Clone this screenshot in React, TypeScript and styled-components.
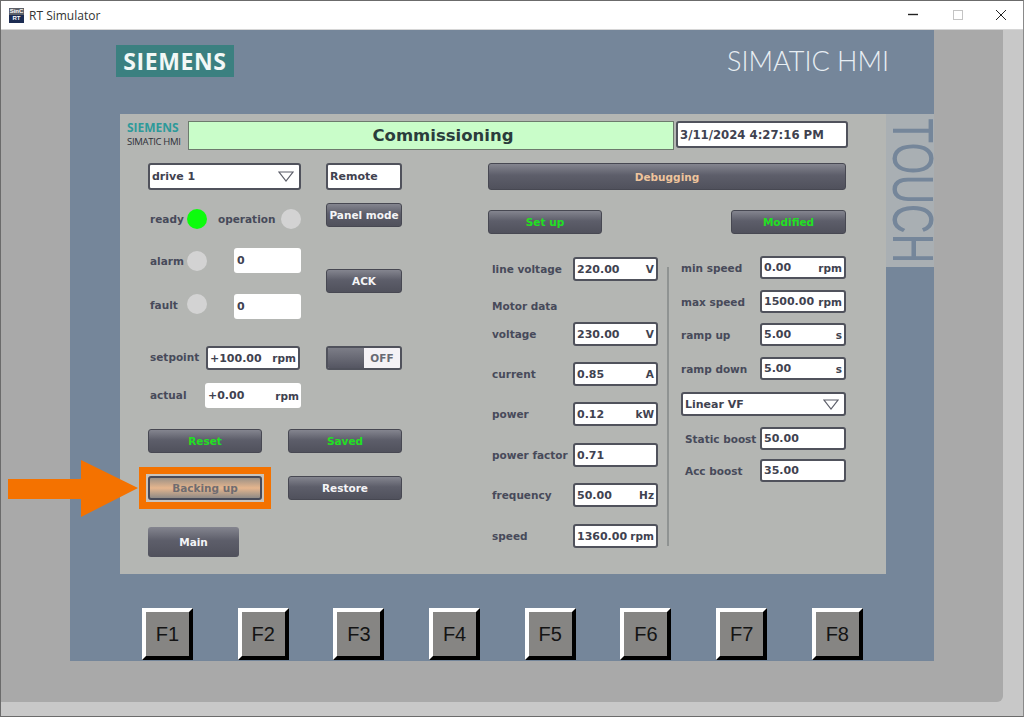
import styled, { createGlobalStyle } from 'styled-components';

const GlobalStyle = createGlobalStyle`
    html, body {
        margin: 0;
        padding: 0;
    }
    body {
        font-family: 'DejaVu Sans', sans-serif;
    }
`;

const Window = styled.div`
    position: relative;
    display: flex;
    flex-direction: column;
    width: 1024px;
    height: 717px;
    overflow: hidden;
    box-sizing: border-box;
    border: 1px solid #6b6b6b;
    border-right-color: #8a8a8a;
    background-color: #c8c8c8;
`;

const TitleBar = styled.div`
    display: flex;
    flex: none;
    align-items: center;
    height: 29px;
    padding: 0 0 0 8px;
    background-color: #fff;
    border-bottom: 1px solid #d6d6d6;
    box-sizing: border-box;
`;

const AppIcon = styled.div`
    display: grid;
    flex: none;
    grid-template-columns: 1fr;
    width: 15px;
    height: 15px;
    margin-right: 5px;
    background: linear-gradient(#5d6068 0 50%, #1c2c52 50% 100%);
    color: #fff;
    font-family: 'Liberation Sans', sans-serif;
    font-size: 6px;
    font-weight: 700;
    line-height: 7px;
    text-align: center;
`;

const AppTitle = styled.span`
    font-family: 'Open Sans', sans-serif;
    font-size: 12px;
    color: #333;
`;

const WindowControls = styled.div`
    display: flex;
    align-items: center;
    margin-left: auto;
`;

const WindowControl = styled.svg`
    display: block;
    width: 46px;
    height: 28px;
`;

const Client = styled.div`
    flex: 1;
    min-height: 0;
`;

const Bezel = styled.div`
    display: flex;
    width: 1002px;
    height: 672px;
    padding-left: 69px;
    box-sizing: border-box;
    background-color: #a9a9a9;
    border-bottom-right-radius: 6px;
`;

const Panel = styled.div`
    display: flex;
    flex-direction: column;
    width: 864px;
    height: 631px;
    background-color: #75869a;
`;

const BrandRow = styled.div`
    display: flex;
    flex: none;
    align-items: flex-start;
    justify-content: space-between;
    height: 84px;
    padding: 15px 45px 0 46px;
    box-sizing: border-box;
`;

const SiemensLogo = styled.div`
    display: flex;
    align-items: center;
    justify-content: center;
    width: 118px;
    height: 32px;
    background-color: #3b8080;
    color: #f2f8f6;
    font-family: 'Open Sans', sans-serif;
    font-size: 23px;
    font-weight: 700;
    letter-spacing: 0.6px;
`;

const SimaticLabel = styled.div`
    color: #e8eef3;
    font-family: 'Lato', sans-serif;
    font-size: 27px;
    font-weight: 300;
    line-height: 32px;
`;

const MiddleRow = styled.div`
    display: flex;
    flex: none;
    align-items: flex-start;
    height: 460px;
    padding-left: 50px;
`;

const Screen = styled.div`
    display: flex;
    flex-direction: column;
    width: 766px;
    height: 460px;
    background-color: #b4b6b3;
    color: #474a5a;
    font-size: 10.5px;
    font-weight: 700;
`;

const TouchStrip = styled.div`
    display: flex;
    align-items: center;
    justify-content: center;
    width: 48px;
    height: 153px;
    padding-left: 6px;
    box-sizing: border-box;
    background-color: #a9afb3;
`;

const TouchText = styled.span`
    display: block;
    flex: none;
    color: #75869a;
    font-family: 'Liberation Sans', sans-serif;
    font-size: 57px;
    line-height: 48px;
    white-space: nowrap;
    writing-mode: vertical-rl;
    transform: scaleY(0.72);
`;

const ScreenHeader = styled.div`
    display: flex;
    flex: none;
    align-items: flex-start;
    height: 49px;
    padding: 7px 0 0 7px;
    box-sizing: border-box;
`;

const MiniBrand = styled.div`
    display: flex;
    flex-direction: column;
    width: 61px;
`;

const MiniSiemens = styled.span`
    color: #2e9a9a;
    font-family: 'Open Sans', sans-serif;
    font-size: 12px;
    font-weight: 700;
    line-height: 13px;
`;

const MiniHmi = styled.span`
    margin-top: 1px;
    color: #2d3038;
    font-family: 'Open Sans', sans-serif;
    font-size: 9.5px;
    font-weight: 400;
    letter-spacing: -0.3px;
    line-height: 13px;
`;

const TitleBox = styled.div`
    display: flex;
    align-items: center;
    justify-content: center;
    width: 486px;
    height: 29px;
    margin-right: 2px;
    padding-left: 24px;
    box-sizing: border-box;
    background-color: #c9fdc9;
    border: 1px solid #6d7a6d;
    color: #2b3c3b;
    font-size: 16.5px;
    font-weight: 700;
`;

const Body = styled.div`
    display: flex;
    padding-left: 28px;
`;

const Column = styled.div<{ $width: number; $ml?: number }>`
    display: flex;
    flex-direction: column;
    flex: none;
    width: ${(props) => props.$width}px;
    margin-left: ${(props) => props.$ml ?? 0}px;
`;

const ParamColumns = styled.div`
    display: flex;
`;

const Row = styled.div<{ $top?: number; $height: number; $between?: boolean }>`
    display: flex;
    flex: none;
    align-items: center;
    justify-content: ${(props) => (props.$between ? 'space-between' : 'flex-start')};
    height: ${(props) => props.$height}px;
    margin-top: ${(props) => props.$top ?? 0}px;
`;

const Label = styled.span<{ $width?: number; $ml?: number; $dy?: number }>`
    flex: none;
    width: ${(props) => (props.$width ? `${props.$width}px` : 'auto')};
    margin-left: ${(props) => props.$ml ?? 0}px;
    margin-top: ${(props) => (props.$dy ?? 0) * 2}px;
    white-space: nowrap;
`;

const Led = styled.span<{ $on?: boolean; $ml?: number; $dy?: number }>`
    flex: none;
    width: 20px;
    height: 20px;
    margin-left: ${(props) => props.$ml ?? 0}px;
    margin-top: ${(props) => (props.$dy ?? 0) * 2}px;
    border-radius: 50%;
    background-color: ${(props) => (props.$on ? '#0dfc0d' : '#d3d3d3')};
`;

const Field = styled.div<{ $width: number; $height?: number; $borderless?: boolean; $ml?: number }>`
    display: flex;
    flex: none;
    align-items: center;
    justify-content: space-between;
    width: ${(props) => props.$width}px;
    height: ${(props) => props.$height ?? 24}px;
    margin-left: ${(props) => props.$ml ?? 0}px;
    padding: 0 2px 0 ${(props) => (props.$borderless ? 3 : 2)}px;
    box-sizing: border-box;
    background-color: #fff;
    border: ${(props) => (props.$borderless ? '0' : '2px solid #50525c')};
    border-radius: 3px;
    color: #3f4250;
    font-size: 11px;
    font-weight: 700;
    white-space: nowrap;
`;

const DateField = styled(Field)`
    font-size: 11.7px;
`;

const Unit = styled.span`
    font-size: 10.5px;
`;

const Button = styled.div<{ $width: number; $height?: number; $color?: string; $ml?: number; $top?: number; $flat?: boolean }>`
    display: flex;
    flex: none;
    align-items: center;
    justify-content: center;
    width: ${(props) => props.$width}px;
    height: ${(props) => props.$height ?? 24}px;
    margin-left: ${(props) => props.$ml ?? 0}px;
    margin-top: ${(props) => props.$top ?? 0}px;
    box-sizing: border-box;
    background: linear-gradient(#84858f, #5d5e6a 45%, #50515c);
    border: ${(props) => (props.$flat ? '0' : '1px solid #474852')};
    border-radius: 3px;
    color: ${(props) => props.$color ?? '#f4f4f6'};
    font-size: 10.5px;
    font-weight: 700;
`;

const Highlight = styled.div`
    flex: none;
    margin: -9px 0 -9px -9px;
    padding: 2px;
    background-color: #c9c4bd;
    border: 7px solid #f47200;
`;

const ActiveButton = styled.div`
    display: flex;
    align-items: center;
    justify-content: center;
    width: 114px;
    height: 24px;
    box-sizing: border-box;
    background: linear-gradient(#9c9186, #e6b68e 50%, #8f8a86);
    border: 2px solid #484a58;
    border-radius: 3px;
    color: #6f6c70;
    font-size: 10.5px;
    font-weight: 700;
`;

const PointerArrow = styled.svg`
    position: absolute;
    left: 6px;
    top: 458px;
    width: 131px;
    height: 58px;
`;

const Toggle = styled.div`
    display: flex;
    width: 76px;
    height: 24px;
    margin-left: 26px;
    overflow: hidden;
    box-sizing: border-box;
    border: 2px solid #50525c;
    border-radius: 3px;
`;

const ToggleThumb = styled.div`
    width: 36px;
    background: linear-gradient(#7c7d87, #555662);
`;

const ToggleLabel = styled.div`
    display: flex;
    flex: 1;
    align-items: center;
    justify-content: center;
    background-color: #f4f2f6;
    color: #686a74;
    font-size: 10.5px;
`;

const Arrow = styled.svg`
    display: block;
    width: 16px;
    height: 11px;
    margin-right: 3px;
`;

const Divider = styled.div`
    flex: none;
    width: 2px;
    height: 279px;
    margin: 33px 12px 0 9px;
    background-color: #8f9392;
`;

const FKeyRow = styled.div`
    display: flex;
    flex: none;
    gap: 44.7px;
    padding: 34px 0 0 72px;
`;

const FKey = styled.div`
    display: flex;
    flex: none;
    align-items: center;
    justify-content: center;
    width: 51px;
    height: 52px;
    box-sizing: border-box;
    background-color: #868583;
    border-style: solid;
    border-width: 4px;
    border-color: #fff #000 #000 #fff;
    color: #141414;
    font-family: 'Liberation Sans', sans-serif;
    font-size: 20px;
`;

const fKeys = ['F1', 'F2', 'F3', 'F4', 'F5', 'F6', 'F7', 'F8'];

const motorFields = [
    { label: 'voltage', value: '230.00', unit: 'V', top: 4 },
    { label: 'current', value: '0.85', unit: 'A', top: 16 },
    { label: 'power', value: '0.12', unit: 'kW', top: 16 },
    { label: 'power factor', value: '0.71', unit: '', top: 17 },
    { label: 'frequency', value: '50.00', unit: 'Hz', top: 16 },
    { label: 'speed', value: '1360.00', unit: 'rpm', top: 17 },
];

const speedFields = [
    { label: 'min speed', value: '0.00', unit: 'rpm', top: 22 },
    { label: 'max speed', value: '1500.00', unit: 'rpm', top: 11 },
    { label: 'ramp up', value: '5.00', unit: 's', top: 10 },
    { label: 'ramp down', value: '5.00', unit: 's', top: 11 },
];

function DropArrow() {
    return (
        <Arrow viewBox="0 0 16 11">
            <path d="M1 1 H15 L8 10 Z" fill="#fff" stroke="#5b5d68" strokeWidth="1.2" />
        </Arrow>
    );
}

function App() {
    return (
        <>
            <GlobalStyle />
            <Window>
                <TitleBar>
                    <AppIcon>
                        <span>SinC</span>
                        <span>RT</span>
                    </AppIcon>
                    <AppTitle>RT Simulator</AppTitle>
                    <WindowControls>
                        <WindowControl viewBox="0 0 46 28">
                            <path d="M23 13.5 H33" stroke="#222" strokeWidth="1.4" />
                        </WindowControl>
                        <WindowControl viewBox="0 0 46 28">
                            <rect x="22.5" y="9.5" width="9" height="9" fill="none" stroke="#c4c4c4" />
                        </WindowControl>
                        <WindowControl viewBox="0 0 46 28">
                            <path d="M19 9 L29 19 M29 9 L19 19" stroke="#222" strokeWidth="1" />
                        </WindowControl>
                    </WindowControls>
                </TitleBar>
                <Client>
                    <Bezel>
                        <Panel>
                            <BrandRow>
                                <SiemensLogo>SIEMENS</SiemensLogo>
                                <SimaticLabel>SIMATIC HMI</SimaticLabel>
                            </BrandRow>
                            <MiddleRow>
                                <Screen>
                                    <ScreenHeader>
                                        <MiniBrand>
                                            <MiniSiemens>SIEMENS</MiniSiemens>
                                            <MiniHmi>SIMATIC HMI</MiniHmi>
                                        </MiniBrand>
                                        <TitleBox>Commissioning</TitleBox>
                                        <DateField $width={172} $height={27}>
                                            3/11/2024 4:27:16 PM
                                        </DateField>
                                    </ScreenHeader>
                                    <Body>
                                        <Column $width={254}>
                                            <Row $height={27}>
                                                <Field $width={153} $height={27}>
                                                    drive 1
                                                    <DropArrow />
                                                </Field>
                                                <Field $width={76} $height={27} $ml={25}>
                                                    Remote
                                                </Field>
                                            </Row>
                                            <Row $top={13} $height={24}>
                                                <Label $width={37} $ml={2} $dy={4}>ready</Label>
                                                <Led $on $dy={4} />
                                                <Label $width={63} $ml={11} $dy={4}>operation</Label>
                                                <Led $dy={4} />
                                                <Button $width={76} $ml={25}>Panel mode</Button>
                                            </Row>
                                            <Row $top={21} $height={25}>
                                                <Label $width={37} $ml={2}>alarm</Label>
                                                <Led />
                                                <Field $width={67} $height={25} $borderless $ml={27}>0</Field>
                                            </Row>
                                            <Button $width={76} $ml={178} $top={-4}>ACK</Button>
                                            <Row $top={1} $height={25}>
                                                <Label $width={37} $ml={2} $dy={-2}>fault</Label>
                                                <Led $dy={-2.5} />
                                                <Field $width={67} $height={25} $borderless $ml={27}>0</Field>
                                            </Row>
                                            <Row $top={27} $height={24}>
                                                <Label $width={56} $ml={2} $dy={-1}>setpoint</Label>
                                                <Field $width={94}>
                                                    +100.00
                                                    <Unit>rpm</Unit>
                                                </Field>
                                                <Toggle>
                                                    <ToggleThumb />
                                                    <ToggleLabel>OFF</ToggleLabel>
                                                </Toggle>
                                            </Row>
                                            <Row $top={13} $height={25}>
                                                <Label $width={55} $ml={2} $dy={-1}>actual</Label>
                                                <Field $width={96} $height={25} $borderless>
                                                    +0.00
                                                    <Unit>rpm</Unit>
                                                </Field>
                                            </Row>
                                            <Row $top={21} $height={24} $between>
                                                <Button $width={114} $color="#22e022">Reset</Button>
                                                <Button $width={114} $color="#22e022">Saved</Button>
                                            </Row>
                                            <Row $top={23} $height={24} $between>
                                                <Highlight>
                                                    <ActiveButton>Backing up</ActiveButton>
                                                </Highlight>
                                                <Button $width={114}>Restore</Button>
                                            </Row>
                                            <Row $top={27} $height={30}>
                                                <Button $width={91} $height={30} $flat>Main</Button>
                                            </Row>
                                        </Column>
                                        <Column $width={358} $ml={86}>
                                            <Button $width={358} $height={27} $color="#eec49c">Debugging</Button>
                                            <Row $top={20} $height={24} $between>
                                                <Button $width={114} $color="#22e022">Set up</Button>
                                                <Button $width={115} $color="#22e022">Modified</Button>
                                            </Row>
                                            <ParamColumns>
                                                <Column $width={170}>
                                                    <Row $top={23} $height={24}>
                                                        <Label $width={81} $ml={4}>line voltage</Label>
                                                        <Field $width={85}>
                                                            220.00
                                                            <Unit>V</Unit>
                                                        </Field>
                                                    </Row>
                                                    <Row $top={13} $height={24}>
                                                        <Label $ml={4}>Motor data</Label>
                                                    </Row>
                                                    {motorFields.map((field) => (
                                                        <Row key={field.label} $top={field.top} $height={24}>
                                                            <Label $width={81} $ml={4}>{field.label}</Label>
                                                            <Field $width={85}>
                                                                {field.value}
                                                                <Unit>{field.unit}</Unit>
                                                            </Field>
                                                        </Row>
                                                    ))}
                                                </Column>
                                                <Divider />
                                                <Column $width={165}>
                                                    {speedFields.map((field) => (
                                                        <Row key={field.label} $top={field.top} $height={23}>
                                                            <Label $width={79}>{field.label}</Label>
                                                            <Field $width={86} $height={23}>
                                                                {field.value}
                                                                <Unit>{field.unit}</Unit>
                                                            </Field>
                                                        </Row>
                                                    ))}
                                                    <Row $top={12} $height={24}>
                                                        <Field $width={165}>
                                                            Linear VF
                                                            <DropArrow />
                                                        </Field>
                                                    </Row>
                                                    <Row $top={11} $height={23}>
                                                        <Label $width={75} $ml={4}>Static boost</Label>
                                                        <Field $width={86} $height={23}>50.00</Field>
                                                    </Row>
                                                    <Row $top={9} $height={23}>
                                                        <Label $width={75} $ml={4}>Acc boost</Label>
                                                        <Field $width={86} $height={23}>35.00</Field>
                                                    </Row>
                                                </Column>
                                            </ParamColumns>
                                        </Column>
                                    </Body>
                                </Screen>
                                <TouchStrip>
                                    <TouchText>TOUCH</TouchText>
                                </TouchStrip>
                            </MiddleRow>
                            <FKeyRow>
                                {fKeys.map((key) => (
                                    <FKey key={key}>{key}</FKey>
                                ))}
                            </FKeyRow>
                        </Panel>
                    </Bezel>
                </Client>
                <PointerArrow viewBox="0 0 131 58">
                    <path d="M1 20 H74 V1 L131 29 L74 58 V40 H1 Z" fill="#f47200" />
                </PointerArrow>
            </Window>
        </>
    );
}

export default App;
